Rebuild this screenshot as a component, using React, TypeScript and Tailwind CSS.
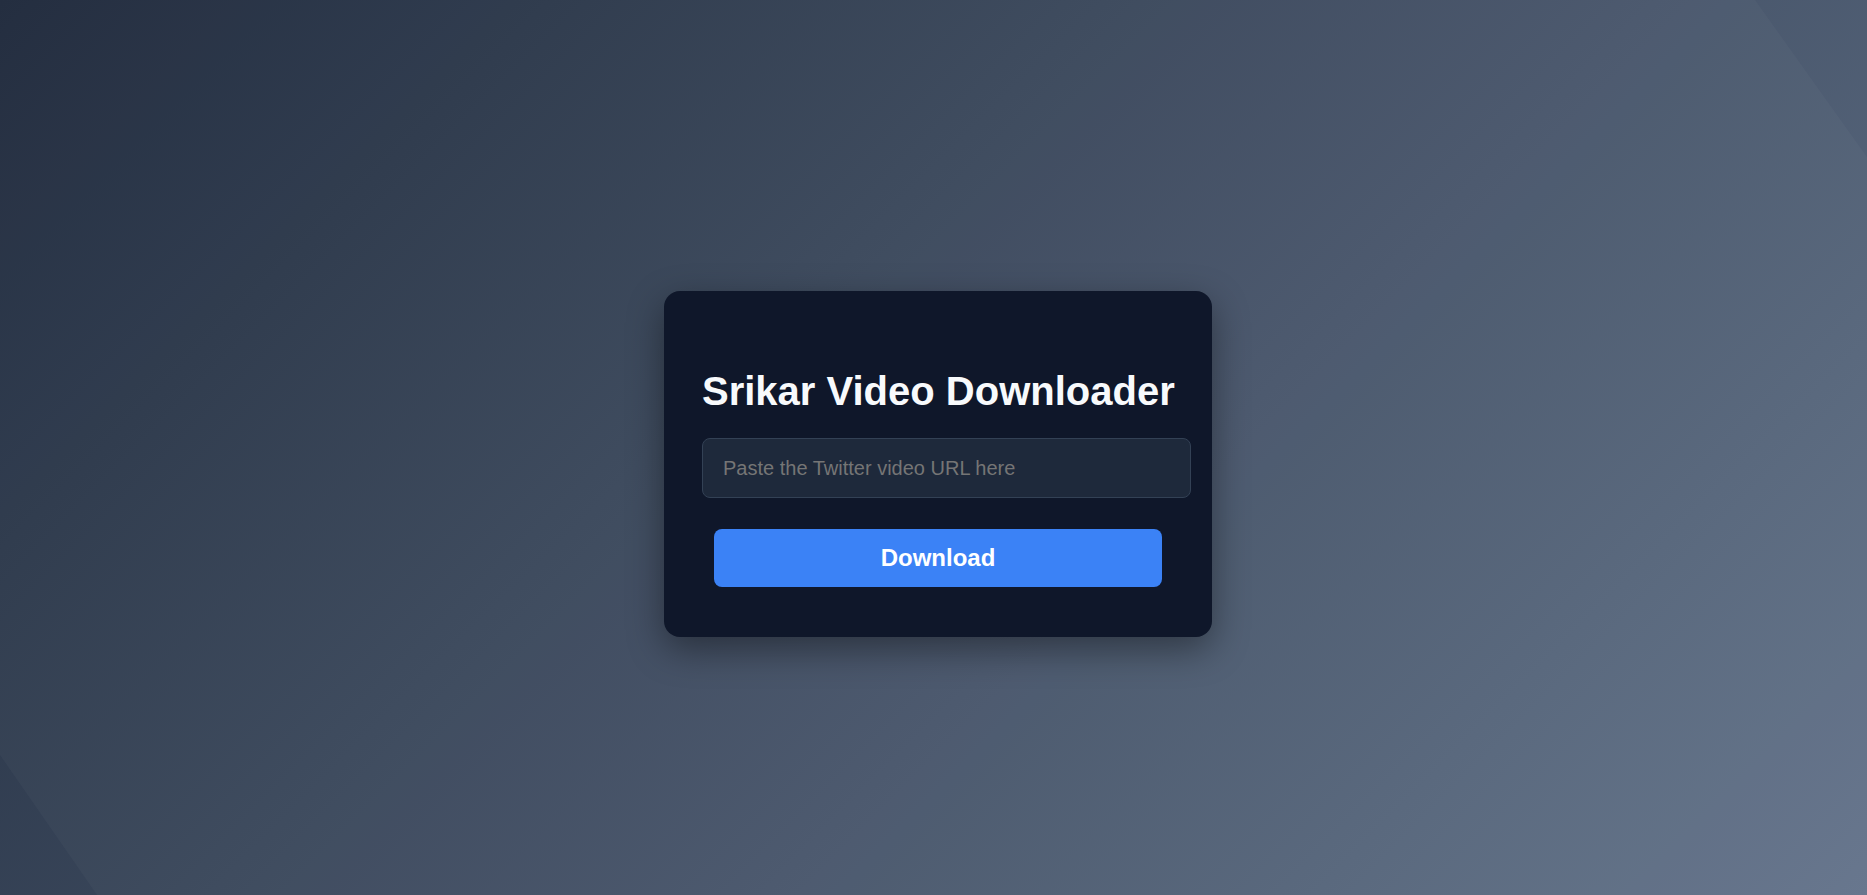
import React, { useState } from 'react';

const App: React.FC = () => {
  const [url, setUrl] = useState('');

  return (
    <div className="relative min-h-screen w-full overflow-hidden bg-[linear-gradient(135deg,#1e293b,#64748b)] font-['Liberation_Sans',Arial,sans-serif]">
      {/* Decorative light band across the background */}
      <svg
        className="pointer-events-none absolute inset-0 h-full w-full"
        viewBox="0 0 1867 895"
        preserveAspectRatio="none"
      >
        <polygon
          points="0,0 1755,0 1867,157 1867,895 97,895 0,755"
          fill="#ffffff"
          fillOpacity="0.028"
        />
      </svg>

      <div className="relative flex min-h-screen items-center justify-center pl-[9px] pt-[33px]">
        {/* Card */}
        <div className="w-[548px] rounded-2xl bg-[#0f172a] pb-[50px] pl-[38px] pr-[38px] pt-[77px] shadow-[0_12px_36px_rgba(0,0,0,0.4)]">
          <h1 className="text-[40px] font-bold leading-[46px] text-[#f8fafc] whitespace-nowrap">
            Srikar Video Downloader
          </h1>
          <input
            type="text"
            value={url}
            onChange={(e) => setUrl(e.target.value)}
            placeholder="Paste the Twitter video URL here"
            className="mt-[24px] block h-[60px] w-[489px] rounded-lg border border-[#334155] bg-[#1e293b] px-[20px] text-[20px] text-white outline-none placeholder:text-[#757575]"
          />
          <button
            type="button"
            className="mx-auto mt-[31px] block h-[58px] w-[448px] rounded-lg bg-[#3b82f6] text-[24px] font-bold text-white"
          >
            Download
          </button>
        </div>
      </div>
    </div>
  );
};

export default App;
